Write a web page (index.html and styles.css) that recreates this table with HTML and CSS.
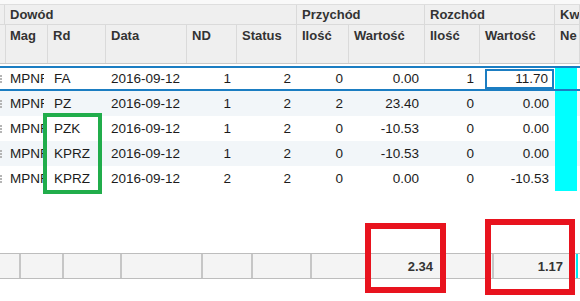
FILE: index.html
```html
<!DOCTYPE html>
<html>
<head>
<meta charset="utf-8">
<link rel="stylesheet" href="styles.css">
</head>
<body>
<div class="grid">
  <div class="topstrip"></div>
  <div class="hdr">
    <div class="hc h1 c-ind"></div>
    <div class="hc h1 span-dow">Dowód</div>
    <div class="hc h1 span-2">Przychód</div>
    <div class="hc h1 span-2">Rozchód</div>
    <div class="hc h1">Kw</div>

    <div class="hc h2"></div>
    <div class="hc h2">Mag</div>
    <div class="hc h2">Rd</div>
    <div class="hc h2">Data</div>
    <div class="hc h2">ND</div>
    <div class="hc h2">Status</div>
    <div class="hc h2">Ilość</div>
    <div class="hc h2">Wartość</div>
    <div class="hc h2">Ilość</div>
    <div class="hc h2">Wartość</div>
    <div class="hc h2">Ne</div>
  </div>

  <div class="rows">
    <div class="row sel">
      <div class="c ind"><span class="dots"></span></div>
      <div class="c mag">MPNF</div><div class="c">FA</div><div class="c">2016-09-12</div>
      <div class="c num">1</div><div class="c num">2</div><div class="c num">0</div><div class="c num">0.00</div>
      <div class="c num">1</div><div class="c num"><span class="focus">11.70</span></div><div class="c cy"><span class="cyan"></span></div>
    </div>
    <div class="row alt">
      <div class="c ind"><span class="dots"></span></div>
      <div class="c mag">MPNF</div><div class="c">PZ</div><div class="c">2016-09-12</div>
      <div class="c num">1</div><div class="c num">2</div><div class="c num">2</div><div class="c num">23.40</div>
      <div class="c num">0</div><div class="c num">0.00</div><div class="c cy"><span class="cyan"></span></div>
    </div>
    <div class="row">
      <div class="c ind"><span class="dots"></span></div>
      <div class="c mag">MPNF</div><div class="c">PZK</div><div class="c">2016-09-12</div>
      <div class="c num">1</div><div class="c num">2</div><div class="c num">0</div><div class="c num">-10.53</div>
      <div class="c num">0</div><div class="c num">0.00</div><div class="c cy"><span class="cyan"></span></div>
    </div>
    <div class="row alt">
      <div class="c ind"><span class="dots"></span></div>
      <div class="c mag">MPNF</div><div class="c">KPRZ</div><div class="c">2016-09-12</div>
      <div class="c num">1</div><div class="c num">2</div><div class="c num">0</div><div class="c num">-10.53</div>
      <div class="c num">0</div><div class="c num">0.00</div><div class="c cy"><span class="cyan"></span></div>
    </div>
    <div class="row">
      <div class="c ind"><span class="dots"></span></div>
      <div class="c mag">MPNF</div><div class="c">KPRZ</div><div class="c">2016-09-12</div>
      <div class="c num">2</div><div class="c num">2</div><div class="c num">0</div><div class="c num">0.00</div>
      <div class="c num">0</div><div class="c num">-10.53</div><div class="c cy"><span class="cyan"></span></div>
    </div>
  </div>

  <div class="spacer"></div>

  <div class="footer">
    <div class="f"></div><div class="f"></div><div class="f"></div>
    <div class="f"></div><div class="f"></div><div class="f"></div>
    <div class="f fnum p1">2.34</div>
    <div class="f"></div>
    <div class="f fnum p2">1.17</div>
    <div class="f fcy"></div>
  </div>
</div>

<div class="mark green"></div>
<div class="mark red1"></div>
<div class="mark red2"></div>
</body>
</html>
```
FILE: styles.css
```css
html, body {
  margin: 0;
  padding: 0;
  background: #ffffff;
}
body {
  width: 580px;
  height: 301px;
  overflow: hidden;
  position: relative;
  font-family: "Liberation Sans", Arial, sans-serif;
  font-size: 13px;
  color: #1b1b1b;
}
.grid {
  width: 580px;
}
.topstrip {
  height: 4px;
  background: #f9f9f9;
  border-bottom: 1px solid #dedede;
}
.hdr {
  display: grid;
  grid-template-columns: 5px 43px 58px 81px 50px 60px 52px 76px 55px 75px 25px;
  grid-template-rows: 20px 38px;
  background: #efefef;
  border-bottom: 1px solid #c9c9c9;
}
.hc {
  box-sizing: border-box;
  border-right: 1px solid #dadada;
  border-bottom: 1px solid #dadada;
  font-weight: bold;
  color: #333333;
  padding-left: 5px;
  white-space: nowrap;
  overflow: hidden;
}
.h1 {
  line-height: 19px;
}
.h2 {
  padding-top: 3px;
  line-height: 16px;
  border-bottom: none;
}
.c-ind, .h2:first-child {
  padding-left: 0;
}
.span-dow { grid-column: span 5; }
.span-2 { grid-column: span 2; }
.rows {
  margin-top: 2px;
  font-size: 13.5px;
}
.row {
  display: grid;
  grid-template-columns: 5px 43px 58px 81px 50px 60px 52px 76px 55px 75px 25px;
  height: 25px;
  box-sizing: border-box;
  background: #ffffff;
}
.row.alt {
  background: #f2f6f9;
}
.row.sel {
  border-top: 2px solid #1b7dc2;
  border-bottom: 2px solid #1b7dc2;
}
.c {
  padding: 0 6px 0 5px;
  white-space: nowrap;
  overflow: hidden;
  display: flex;
  align-items: center;
}
.c.mag {
  padding-right: 0;
  margin-right: 4px;
}
.c:nth-child(3) { padding-left: 6px; }
.num {
  justify-content: flex-end;
}
.ind {
  padding: 0;
  justify-content: flex-start;
}
.dots {
  width: 0;
  height: 8px;
  border-left: 2px dotted #b5b5b5;
}
.cy {
  padding: 0;
  align-items: stretch;
}
.cyan {
  display: block;
  width: 22px;
  background: #00ffff;
}
.focus {
  display: flex;
  align-items: center;
  justify-content: flex-end;
  box-sizing: border-box;
  width: 72px;
  height: 20px;
  margin-right: -5px;
  padding-right: 4px;
  border: 2px solid #1b7dc2;
}
.spacer {
  height: 62px;
}
.footer {
  display: grid;
  grid-template-columns: 21px 43px 58px 81px 50px 59px 131px 51px 81px 5px;
  height: 26px;
  box-sizing: border-box;
  background: #f4f4f4;
  border-top: 1px solid #bdbdbd;
  border-bottom: 1px solid #bdbdbd;
}
.f {
  box-sizing: border-box;
  border-right: 2px solid #c6c6c6;
  display: flex;
  align-items: center;
  justify-content: flex-end;
  font-weight: bold;
  color: #333333;
}
.p1 { padding-right: 8px; }
.p2 { padding-right: 12px; border-right: none; }
.fcy {
  border-right: none;
  background: linear-gradient(to right, #f4f4f4 0, #f4f4f4 1px, #00e8f0 1px, #00e8f0 3px, #ffffff 3px);
}
.mark {
  position: absolute;
  box-sizing: border-box;
}
.green {
  left: 43px;
  top: 113px;
  width: 59px;
  height: 81px;
  border: 4px solid #21ad4b;
}
.red1 {
  left: 365px;
  top: 223px;
  width: 81px;
  height: 70px;
  border: 6px solid #e8131e;
}
.red2 {
  left: 485px;
  top: 219px;
  width: 90px;
  height: 76px;
  border: 6px solid #e8131e;
}
```
